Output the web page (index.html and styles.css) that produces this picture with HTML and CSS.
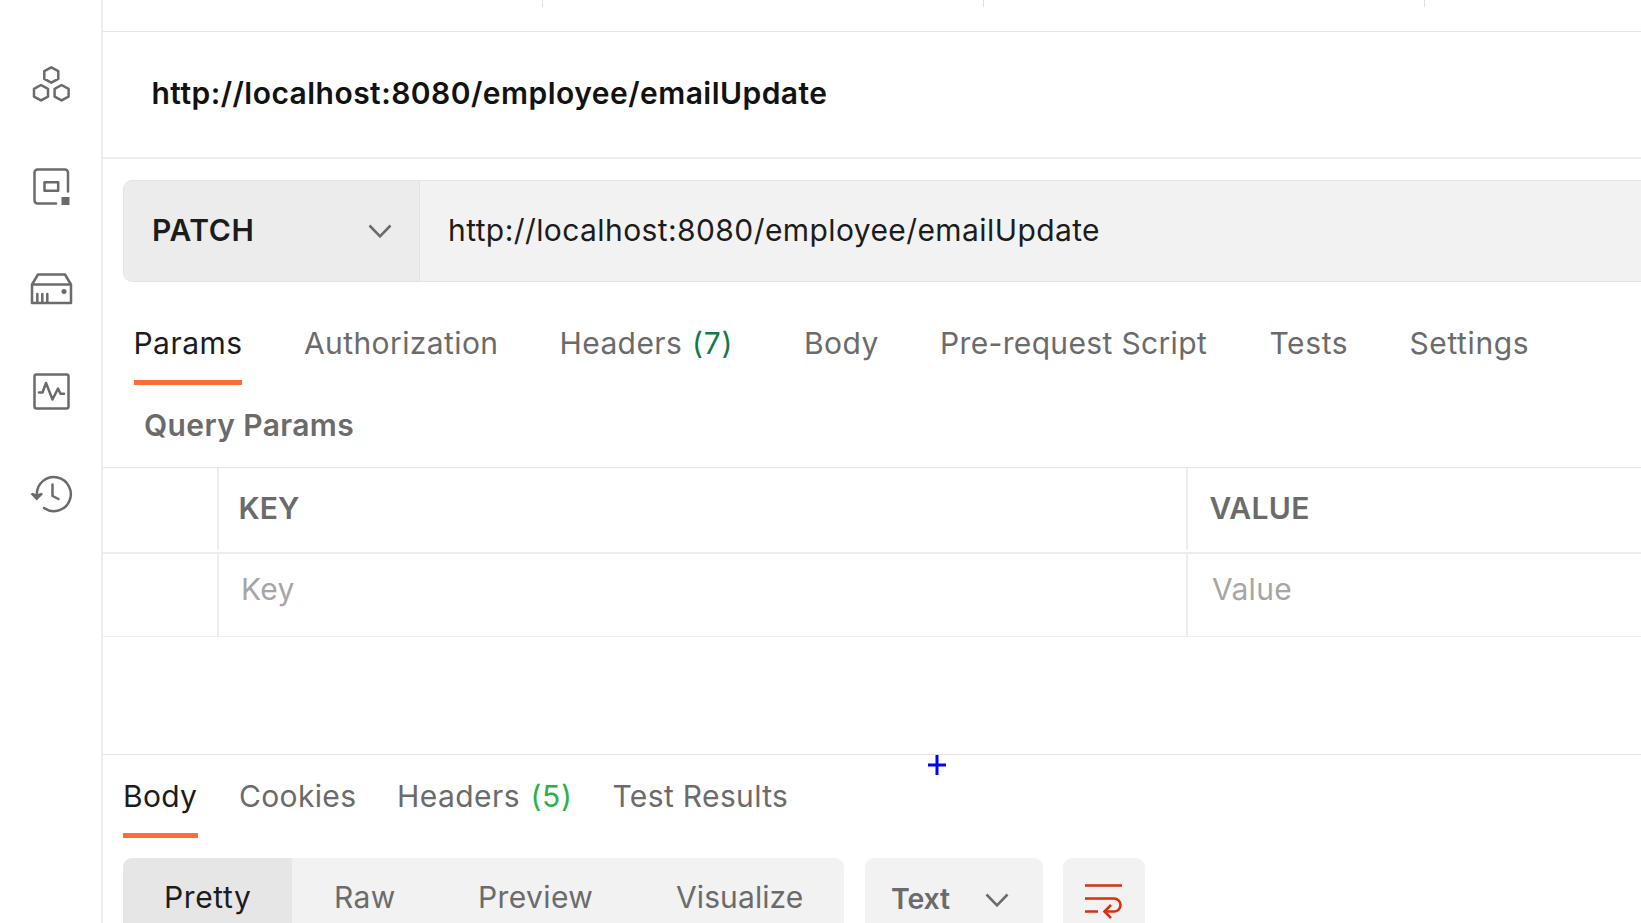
FILE: index.html
```html
<!DOCTYPE html>
<html lang="en">
<head>
<meta charset="utf-8">
<title>emailUpdate</title>
<link rel="stylesheet" href="styles.css">
</head>
<body>
<div class="app">
  <nav class="sidebar">
    <svg class="nav-icon" viewBox="0 0 48 48"><g class="line"><path d="M24.300 8.300l7 3.800v7.800l-7 3.800-7-3.800v-7.800zM14 26l7 3.800v7.800l-7 3.800-7-3.800v-7.800zM34.600 26l7 3.800v7.800l-7 3.800-7-3.800v-7.800z"/></g></svg>
    <svg class="nav-icon" viewBox="0 0 48 48"><g class="line"><path d="M29 41.500H10.500a3 3 0 0 1-3-3V10.500a3 3 0 0 1 3-3H38a3 3 0 0 1 3 3v19"/><path d="M17.500 20.300H31.200v8.500H17.500z"/></g><path class="solid" d="M34.500 35H42.500v8H34.500z"/></svg>
    <svg class="nav-icon" viewBox="0 0 48 48"><g class="line"><path d="M5 20.500H44v18.500H5zM5 20.500L11 10.500H38L44 20.500M10.300 30v9M15.300 30v9M20.300 30v9"/></g><circle class="solid" cx="37" cy="27.500" r="2.500"/></svg>
    <svg class="nav-icon" viewBox="0 0 48 48"><g class="line"><rect x="7.500" y="7.500" width="34" height="34" rx="2"/><path d="M12 25.500h3.500l3.500-9.500 6.500 16.500 5.500-11 2.500 5.300H37"/></g></svg>
    <svg class="nav-icon" viewBox="0 0 48 48"><g class="line"><path d="M9.800 29V25A17 17 0 1 1 17 39"/><path d="M25.500 15.500v11.500l6 3"/></g><path class="solid" d="M3.500 25l2-1.200 4.300 1.700 4.300-1.700 2 1.200-6.300 6.500z"/></svg>
  </nav>
  <main class="main">
    <div class="tabstrip"><i></i><i></i><i></i></div>
    <header class="title">http://localhost:8080/employee/emailUpdate</header>
    <div class="request">
      <div class="method"><span>PATCH</span>
        <svg class="chevron" viewBox="0 0 24 14"><path d="M1.500 1.500L12 12.300 22.500 1.500"/></svg>
      </div>
      <div class="url">http://localhost:8080/employee/emailUpdate</div>
    </div>
    <div class="tabs">
      <span class="tab active s45">Params</span>
      <span class="tab s4">Authorization</span>
      <span class="tab s4">Headers</span>
      <span class="tab s8 count-dark">(7)</span>
      <span class="tab s45">Body</span>
      <span class="tab s35">Pre-request Script</span>
      <span class="tab s6">Tests</span>
      <span class="tab s6">Settings</span>
    </div>
    <div class="section">Query Params</div>
    <div class="row head"><div></div><div class="s1">KEY</div><div class="s3">VALUE</div></div>
    <div class="row entry"><div></div><div class="s3">Key</div><div class="s3">Value</div></div>
    <section class="response">
      <div class="rtabs">
        <span class="tab active s3">Body</span>
        <span class="tab s35">Cookies</span>
        <span class="tab s45">Headers</span>
        <span class="tab s6 count">(5)</span>
        <span class="tab s35">Test Results</span>
      </div>
      <div class="views">
        <div class="segments">
          <span class="seg on s6">Pretty</span><span class="seg s4">Raw</span><span class="seg s4">Preview</span><span class="seg s1">Visualize</span>
        </div>
        <div class="format"><span>Text</span><svg class="chevron" viewBox="0 0 24 14"><path d="M1.500 1.500L12 12.300 22.500 1.500"/></svg></div>
        <div class="wrap"><svg viewBox="0 0 38 36"><path d="M0 3.500H37M0 16.500H29a6.500 6.500 0 0 1 0 13H21M0 29.500H13"/><path d="M26 23L19.500 29.500l6.500 6.500"/></svg></div>
      </div>
      <svg class="cursor" viewBox="0 0 18 20"><path d="M9 0v20M0 10h18"/></svg>
    </section>
  </main>
</div>
</body>
</html>
```
FILE: styles.css
```css
* { box-sizing: border-box; }
body {
  margin: 0;
  background: #fff;
  color: #6b6b6b;
  font: 400 30px/40px Inter, "Liberation Sans", sans-serif;
  white-space: nowrap;
  overflow: hidden;
}
.app { display: flex; height: 923px; overflow: hidden; }

.sidebar {
  width: 103px;
  flex: none;
  border-right: 2px solid #ededed;
  padding: 59px 0 0 27px;
  display: flex;
  flex-direction: column;
  gap: 54.500px;
}
.nav-icon { width: 48px; height: 48px; flex: none; overflow: visible; }
.line { fill: none; stroke: #6b6b6b; stroke-width: 2.5; stroke-linejoin: round; stroke-linecap: round; }
.solid { fill: #6b6b6b; }

.main { flex: 1; min-width: 0; }
.tabstrip {
  height: 32px;
  border-bottom: 1px solid #e6e6e6;
  padding-left: 439px;
  display: flex;
  gap: 440px;
}
.tabstrip i { width: 1px; height: 7px; background: #e2e2e2; }
.title {
  height: 127px;
  border-bottom: 2px solid #ededed;
  padding: 41px 0 0 48.500px;
  font-weight: 600;
  color: #121212;
  letter-spacing: .46px;
}

.request {
  display: flex;
  height: 102px;
  margin: 21px 0 0 20px;
  border: 1px solid #e3e3e3;
  border-right: 0;
  border-radius: 9px 0 0 9px;
  background: #f2f2f2;
  overflow: hidden;
  color: #1c1c1c;
}
.method {
  width: 296px;
  padding: 29px 27px 0 28px;
  display: flex;
  justify-content: space-between;
  background: #ececec;
  border-right: 1px solid #e3e3e3;
  font-weight: 600;
  letter-spacing: .6px;
}
.chevron { width: 24px; height: 14px; fill: none; stroke: #6b6b6b; stroke-width: 2.6; }
.method .chevron { margin-top: 14px; }
.url { padding: 29px 0 0 28px; letter-spacing: .41px; }

.tabs {
  display: grid;
  grid-template-columns: 170.500px 255.500px 132.500px 112px 136px 329.500px 140px auto;
  justify-items: start;
  height: 103px;
  padding: 41px 0 0 30.500px;
}
.tab { height: 62px; }
.tab.active { color: #1c1c1c; border-bottom: 5px solid #ff6c37; }
.count-dark { color: #13794c; }
.count { color: #2db04b; }

.section {
  height: 83px;
  padding: 20px 0 0 41px;
  font-weight: 600;
  letter-spacing: .38px;
  border-bottom: 1px solid #e6e6e6;
}

.row { display: grid; grid-template-columns: 114px 969px 1fr; border-bottom: 2px solid #ededed; }
.row > div + div { border-left: 2px solid #ededed; }
.head { height: 86px; font-weight: 600; padding-bottom: 2px; }
.head > div { padding: 20px 0 0 19.500px; }
.head > div:last-child { padding-left: 21.500px; }
.entry { height: 83px; color: #a6a6a6; border-bottom-width: 1px; }
.entry > div { padding: 15px 0 0 22px; }
.entry > div:last-child { padding-left: 24px; }

.response { position: relative; margin-top: 117px; border-top: 1px solid #e3e3e3; }
.rtabs {
  display: grid;
  grid-template-columns: 116px 158px 133.500px 82px auto;
  justify-items: start;
  height: 103px;
  padding: 21px 0 0 20px;
}
.rtabs .active { padding-right: 1px; }
.views { display: flex; gap: 20.500px; padding-left: 20px; height: 78px; }
.segments, .format, .wrap { background: #f2f2f2; border-radius: 9px; overflow: hidden; }
.segments { display: grid; grid-template-columns: 169px 144px 198px 210px; }
.seg { padding: 19px 0 0 42px; }
.seg.on { background: #e6e6e6; color: #1c1c1c; padding-left: 41px; }
.format {
  width: 178px;
  padding: 21px 34px 0 26.500px;
  display: flex;
  justify-content: space-between;
  font-size: 28.500px;
  font-weight: 600;
  letter-spacing: -.2px;
}
.format .chevron { margin-top: 14px; }
.wrap { width: 82px; padding: 24px 0 0 22px; }
.wrap svg { width: 38px; height: 36px; fill: none; stroke: #d9310f; stroke-width: 2.6; overflow: visible; }
.cursor { position: absolute; left: 825px; top: 0; width: 18px; height: 20px; stroke: #00f; stroke-width: 3; }

.s1 { letter-spacing: .1px; }
.s3 { letter-spacing: .3px; }
.s35 { letter-spacing: .35px; }
.s4 { letter-spacing: .4px; }
.s45 { letter-spacing: .45px; }
.s6 { letter-spacing: .6px; }
.s8 { letter-spacing: .8px; }
```
